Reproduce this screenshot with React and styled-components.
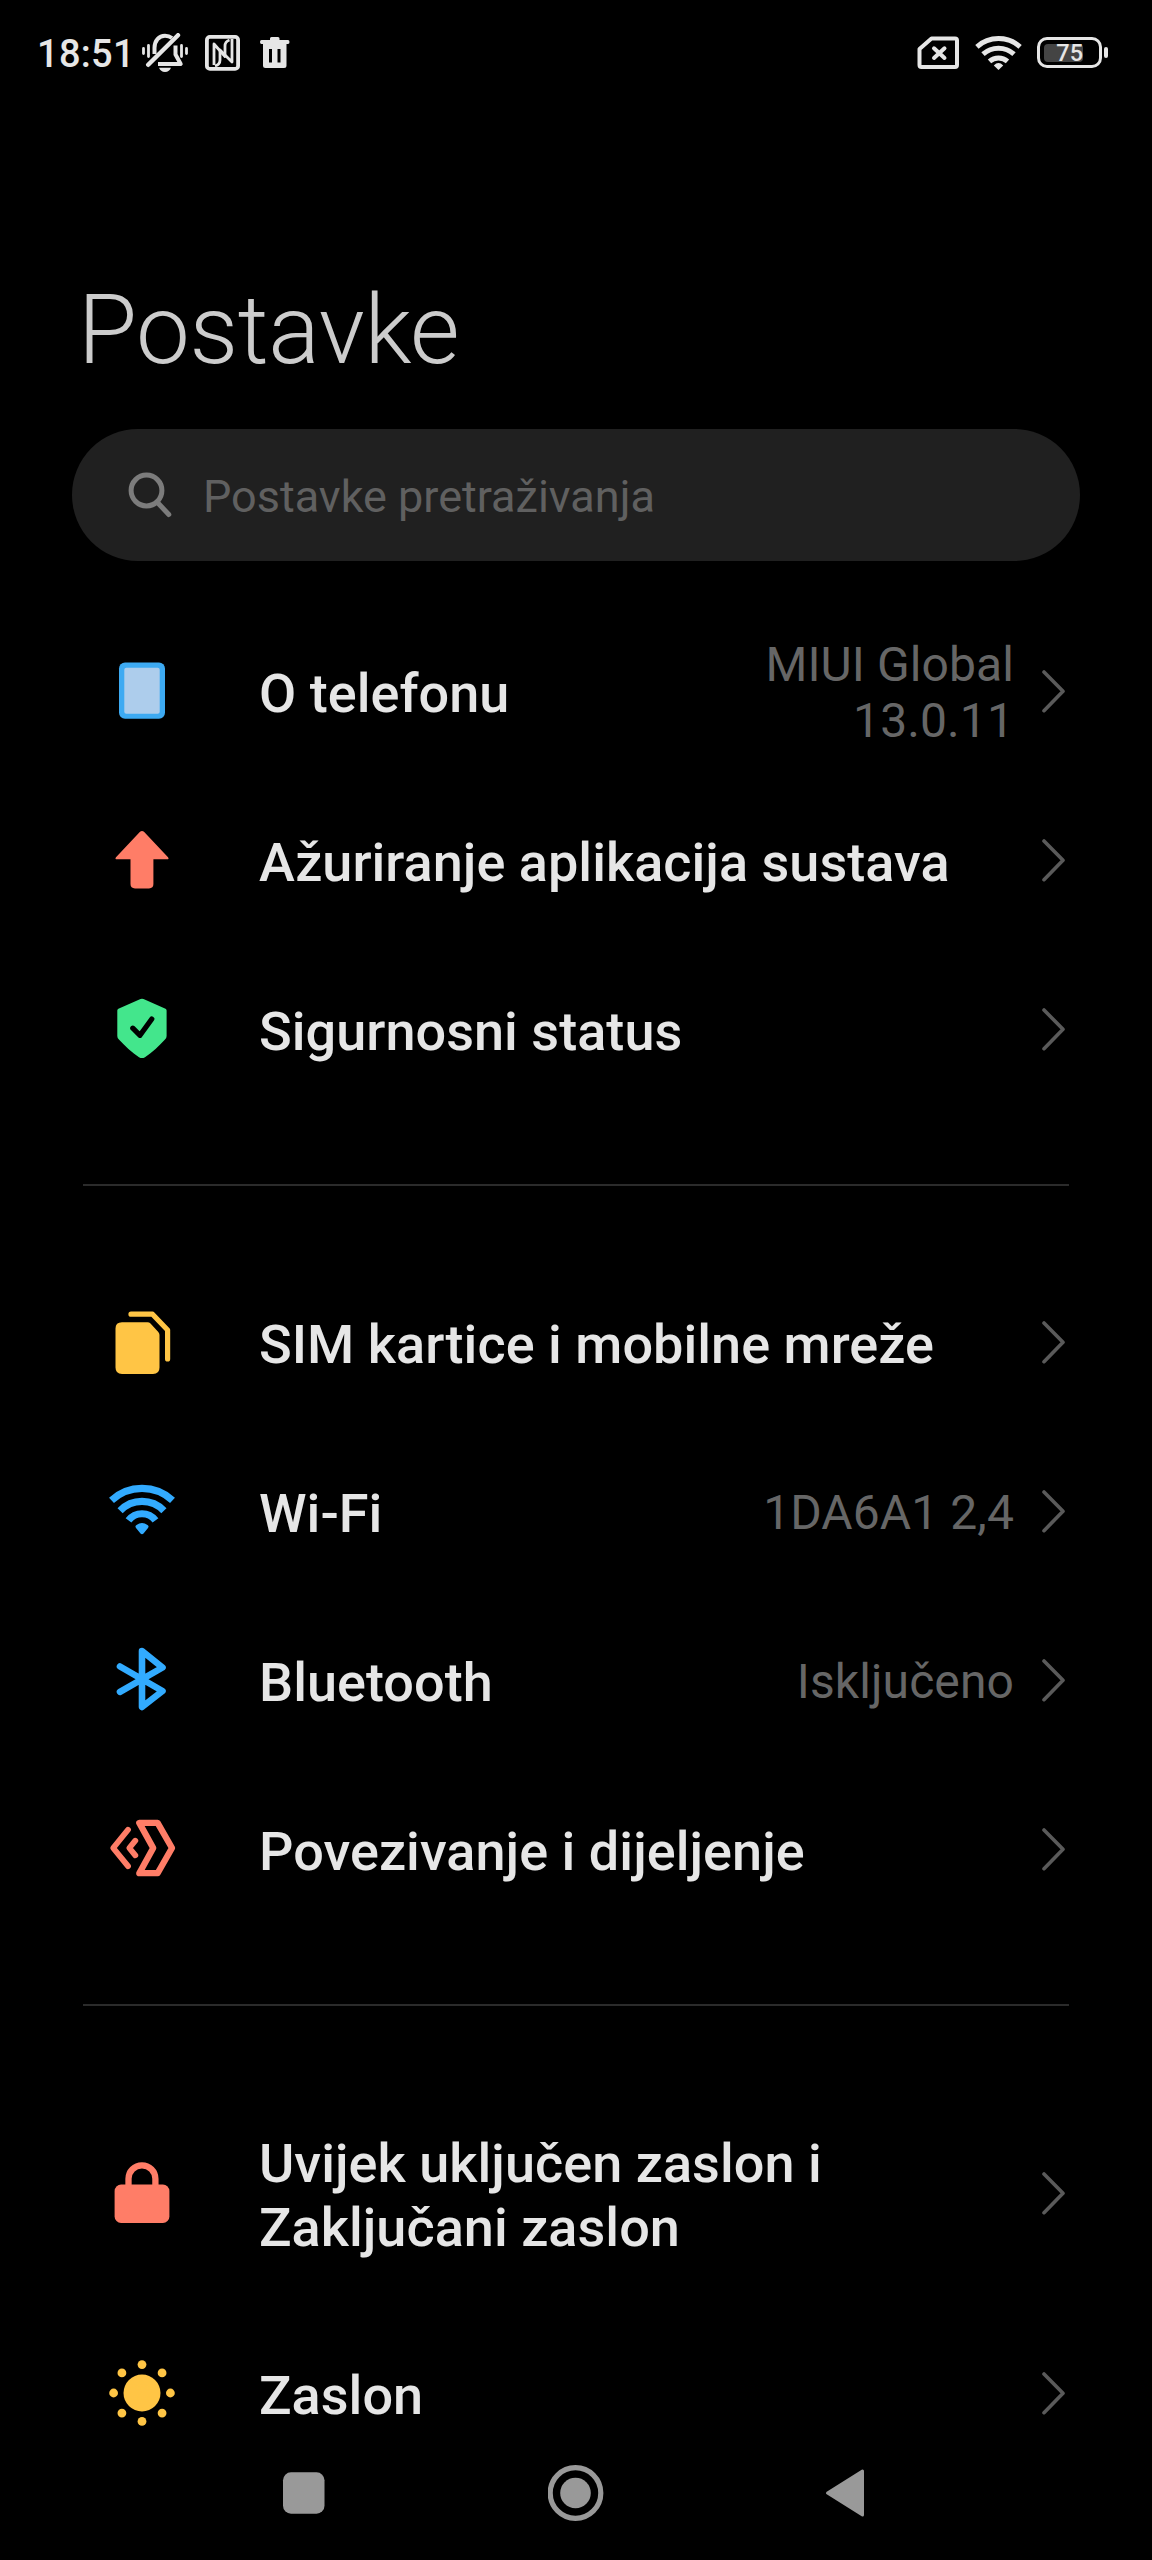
import React from 'react';
import styled, { createGlobalStyle } from 'styled-components';

const GlobalStyle = createGlobalStyle`
    * {
        box-sizing:border-box;
    }
    body {
        margin:0;
        background:#000;
        font-family:Roboto, "Noto Sans", sans-serif;
    }
    svg {
        display:block;
        flex-shrink:0;
    }
`
const Screen = styled.div`
    display:flex;
    flex-direction:column;
    width:1152px;
    height:2560px;
    background:#000;
`
const StatusBar = styled.header`
    display:flex;
    justify-content:space-between;
    align-items:center;
    height:105px;
    padding:0 44px 0 37px;
    color:#e6e6e6;
`
const StatusGroup = styled.div`
    display:flex;
    align-items:center;
    gap:${({ $gap }) => $gap}px;
`
const Clock = styled.span`
    width:88px;
    padding-top:2px;
    font-size:38px;
    font-weight:500;
    line-height:44px;
    letter-spacing:0.3px;
    white-space:nowrap;
`
const Battery = styled.div`
    display:flex;
    align-items:center;
    gap:2px;
`
const BatteryBody = styled.div`
    display:flex;
    align-items:center;
    width:65px;
    height:31px;
    padding:0 4px;
    border:3px solid #e6e6e6;
    border-radius:10px;
`
const BatteryLevel = styled.div`
    display:flex;
    justify-content:flex-end;
    align-items:center;
    width:39px;
    height:18px;
    border-radius:4px;
    background:#444;
    font-size:23.5px;
    font-weight:500;
    line-height:18px;
`
const BatteryTip = styled.div`
    width:4px;
    height:11px;
    border-radius:2px;
    background:#e6e6e6;
`
const Title = styled.h1`
    margin:169px 0 0 78px;
    font-size:96px;
    font-weight:300;
    line-height:112px;
    letter-spacing:-0.4px;
    color:#ccc;
`
const Search = styled.div`
    display:flex;
    align-items:center;
    gap:29px;
    height:132px;
    margin:43px 72px 0;
    padding-left:56px;
    border-radius:66px;
    background:#202020;
    font-size:45px;
    line-height:53px;
    color:#606060;
`
const SearchText = styled.span`
    padding-top:3px;
`
const List = styled.main`
    flex:1;
    min-height:0;
    padding-top:45px;
`
const Divider = styled.hr`
    height:2px;
    margin:71px 83px;
    border:0;
    background:#2b2b2b;
`
const Row = styled.div`
    display:flex;
    align-items:center;
    height:${({ $tall }) => ($tall ? 231 : 169)}px;
    padding:0 86px 0 109px;
`
const Label = styled.div`
    flex:1;
    margin-left:84px;
    padding-top:6px;
    font-size:54px;
    font-weight:500;
    line-height:63.3px;
    letter-spacing:0.04px;
    color:#e6e6e6;
    white-space:pre-line;
`
const Value = styled.div`
    padding-top:5px;
    font-size:48px;
    line-height:56px;
    letter-spacing:0.1px;
    text-align:right;
    color:#666;
    white-space:pre-line;
`
const Chevron = styled.svg`
    margin-left:26px;
`
const NavBar = styled.nav`
    display:flex;
    justify-content:space-between;
    align-items:center;
    height:134px;
    padding:0 276px;
`

const RowIcon = ({ children }) => (
    <svg width="66" height="66" viewBox="0 0 66 66" fill="none" overflow="visible">{children}</svg>
)

const PhoneIcon = () => (
    <RowIcon>
        <rect x="10" y="4.4" width="46" height="56.4" rx="6" fill="#3daaf2" />
        <rect x="15.3" y="9.7" width="35.4" height="46" rx="2" fill="#adcdec" />
    </RowIcon>
)
const ArrowIcon = () => (
    <RowIcon>
        <path
            d="M31 4.8Q33 3 35 4.8L59 30.2Q60.5 32.2 58 32.2H44.4V57Q44.4 61.4 40 61.4H26Q21.5 61.4 21.5 57V32.2H8Q5.5 32.2 7 30.2Z"
            fill="#ff7d67"
        />
    </RowIcon>
)
const ShieldIcon = () => (
    <RowIcon>
        <path
            d="M31.5 3Q33 2.3 34.5 3L56.5 12.8Q57.6 13.4 57.6 14.6V40Q57.6 42 56 43.6C50 50 43.5 56.5 36 61.2Q33 63 30 61.2C22.5 56.5 16 50 9.9 43.6Q8.3 42 8.3 40V14.6Q8.3 13.4 9.4 12.8Z"
            fill="#43e68c"
        />
        <path d="M23.8 32.2L31 39.3L42.8 23" stroke="#000" strokeWidth="5.2" strokeLinecap="round" strokeLinejoin="round" />
    </RowIcon>
)
const SimIcon = () => (
    <RowIcon>
        <path d="M13 13.2H38.5Q40.3 13.2 41.5 14.4L49.3 23Q50.5 24.3 50.5 26V58.5Q50.5 65 44 65H13Q6.5 65 6.5 58.5V19.5Q6.5 13.2 13 13.2Z" fill="#ffc545" />
        <path d="M22 5.2H43.5L58.6 21V50" stroke="#ffc545" strokeWidth="5.2" strokeLinecap="round" strokeLinejoin="round" />
    </RowIcon>
)
const WifiIcon = () => (
    <RowIcon>
        <g stroke="#32abff" strokeWidth="7.2">
            <path d="M2.5 22.3A44.8 44.8 0 0 1 63.5 22.3" />
            <path d="M11.1 32.7A30.4 30.4 0 0 1 54.9 32.7" />
            <path d="M19.5 42.4A17 17 0 0 1 46.5 42.4" />
        </g>
        <path d="M27.2 50.2Q25.5 48.3 27.5 46.9Q33 43.3 38.5 46.9Q40.5 48.3 38.8 50.2L34.5 55.5Q33 57 31.5 55.5Z" fill="#32abff" />
    </RowIcon>
)
const BluetoothIcon = () => (
    <RowIcon>
        <path d="M11 19.5L53.5 44L33 60V4L53.5 20.5L11 44.8" stroke="#32abff" strokeWidth="6.6" strokeLinecap="round" strokeLinejoin="round" />
    </RowIcon>
)
const ShareIcon = () => (
    <RowIcon>
        <g stroke="#ff7d67" strokeWidth="6.3" strokeLinecap="round" strokeLinejoin="round">
            <path d="M30.3 6.9H48.6L63 32L48.6 57.2H30.3L44.2 32Z" />
            <path d="M19 13.7L4.2 32L19 50.2" strokeWidth="5.8" />
            <path d="M26.3 24.7L20.3 32L26.3 39.3" strokeWidth="5.8" />
        </g>
    </RowIcon>
)
const LockIcon = () => (
    <RowIcon>
        <rect x="5.6" y="24.5" width="54.8" height="38.4" rx="6.5" fill="#ff7d67" />
        <path d="M19.5 26V18.8A13.4 13.4 0 0 1 46.4 18.8V26" stroke="#ff7d67" strokeWidth="6.3" />
    </RowIcon>
)
const SunIcon = () => (
    <RowIcon>
        <g fill="#ffc545">
            <circle cx="33" cy="33" r="18.5" />
            {[0, 45, 90, 135, 180, 225, 270, 315].map((angle) => (
                <circle key={angle} cx="33" cy="4.6" r="4.4" transform={`rotate(${angle} 33 33)`} />
            ))}
        </g>
    </RowIcon>
)

const MutedIcon = () => (
    <svg width="46" height="40" viewBox="0 0 46 40" fill="none" stroke="#e6e6e6">
        <path d="M6.2 31.8L36 2.2" strokeWidth="4.4" strokeLinecap="round" />
        <path d="M12.5 21V15C12.5 7.5 17 2.8 23 2.8C25.5 2.8 28 3.500 30 5" strokeWidth="4" />
        <path d="M33.5 12.5V21.5L38.7 31H16" strokeWidth="4" strokeLinejoin="round" />
        <path d="M17 34.8H29C28 37.5 26 39 23 39C20 39 18 37.5 17 34.8Z" fill="#e6e6e6" stroke="none" />
        <path d="M1.5 15.5V20.5M6.5 12.5V23.5M39.5 12.5V23.5M44.5 15.5V20.5" strokeWidth="2.8" strokeLinecap="round" />
    </svg>
)
const NfcIcon = () => (
    <svg width="35" height="36" viewBox="0 0 35 36" fill="none" stroke="#e6e6e6" strokeLinejoin="round">
        <rect x="1.9" y="1.9" width="31.2" height="32" rx="3" strokeWidth="3.8" />
        <path d="M9 30V9L20 21.5V11Q20 6.5 24.500 5" strokeWidth="2.8" />
        <path d="M27 4V27L15 15V25Q15 29.5 10 31" strokeWidth="2.8" />
    </svg>
)
const TrashIcon = () => (
    <svg width="33" height="32" viewBox="-3 0 33 32" fill="#e6e6e6">
        <path d="M10 3V1.5Q10 0 11.5 0H18Q19.5 0 19.5 1.5V3H28Q29.5 3 29.5 5T28 7H1.5Q0 7 0 5T1.5 3Z" />
        <path fillRule="evenodd" d="M3 6.5H26.5V28.5Q26.5 31 24 31H5.5Q3 31 3 28.5ZM9 12V25.500H12V12ZM17.5 12V25.500H20.5V12Z" />
    </svg>
)
const NoSimIcon = () => (
    <svg width="43" height="34" viewBox="0 0 43 34" fill="none" stroke="#e6e6e6" strokeLinejoin="round">
        <path d="M14.5 2.5H38Q40 2.5 40 4.5V29Q40 31 38 31H4.5Q2.5 31 2.5 29V13Z" strokeWidth="4" />
        <path d="M17 12.3L27.5 22M27.5 12.3L17 22" strokeWidth="4" strokeLinecap="round" />
    </svg>
)
const SignalIcon = () => (
    <svg width="47" height="36" viewBox="0 0 47 36" fill="none" stroke="#e6e6e6" strokeWidth="5">
        <path d="M1.9 11.8A32.5 32.5 0 0 1 45.1 11.8" />
        <path d="M8 19.2A23 23 0 0 1 39 19.2" />
        <path d="M14.5 26.4A13.5 13.5 0 0 1 32.5 26.4" />
        <path d="M18.8 30.5Q23.5 25.6 28.2 30.5L23.5 35Z" fill="#e6e6e6" stroke="none" />
    </svg>
)
const SearchIcon = () => (
    <svg width="46" height="46" viewBox="0 0 46 46" fill="none" stroke="#7c7c7c" strokeLinecap="round">
        <circle cx="18.5" cy="18.5" r="15.4" strokeWidth="5" />
        <path d="M29.5 30.5L40.8 42.5" strokeWidth="5" />
    </svg>
)

const SquareButton = () => (
    <svg width="56" height="56" viewBox="0 0 56 56">
        <rect x="7" y="7.3" width="41.5" height="41.4" rx="8" fill="#999" />
    </svg>
)
const HomeButton = () => (
    <svg width="56" height="56" viewBox="0 0 56 56">
        <circle cx="27.5" cy="28" r="25.3" fill="none" stroke="#999" strokeWidth="5.2" />
        <circle cx="27.5" cy="28" r="15.3" fill="#999" />
    </svg>
)
const BackButton = () => (
    <svg width="56" height="56" viewBox="0 0 56 56">
        <path d="M7.5 28L42.5 6V50Z" fill="#999" stroke="#999" strokeWidth="3" strokeLinejoin="round" />
    </svg>
)

const groups = [
    [
        { icon: PhoneIcon, label: 'O telefonu', value: 'MIUI Global\n13.0.11' },
        { icon: ArrowIcon, label: 'Ažuriranje aplikacija sustava' },
        { icon: ShieldIcon, label: 'Sigurnosni status' },
    ],
    [
        { icon: SimIcon, label: 'SIM kartice i mobilne mreže' },
        { icon: WifiIcon, label: 'Wi-Fi', value: '1DA6A1 2,4' },
        { icon: BluetoothIcon, label: 'Bluetooth', value: 'Isključeno' },
        { icon: ShareIcon, label: 'Povezivanje i dijeljenje' },
    ],
    [
        { icon: LockIcon, label: 'Uvijek uključen zaslon i\nZaključani zaslon', tall: true },
        { icon: SunIcon, label: 'Zaslon' },
    ],
]

const SettingsRow = ({ icon: Icon, label, value, tall }) => (
    <Row $tall={tall}>
        <Icon />
        <Label>{label}</Label>
        {value && <Value>{value}</Value>}
        <Chevron width="26" height="44" viewBox="0 0 26 44" fill="none">
            <path d="M4 3L23 22.3L4 41.7" stroke="#5a5a5a" strokeWidth="3.6" strokeLinecap="round" strokeLinejoin="round" />
        </Chevron>
    </Row>
)

const App = () => {
    return (
        <Screen>
            <GlobalStyle />
            <StatusBar>
                <StatusGroup $gap={17}>
                    <Clock>18:51</Clock>
                    <MutedIcon />
                    <NfcIcon />
                    <TrashIcon />
                </StatusGroup>
                <StatusGroup $gap={15}>
                    <NoSimIcon />
                    <SignalIcon />
                    <Battery>
                        <BatteryBody>
                            <BatteryLevel>75</BatteryLevel>
                        </BatteryBody>
                        <BatteryTip />
                    </Battery>
                </StatusGroup>
            </StatusBar>
            <Title>Postavke</Title>
            <Search>
                <SearchIcon />
                <SearchText>Postavke pretraživanja</SearchText>
            </Search>
            <List>
                {groups.map((rows, index) => (
                    <React.Fragment key={index}>
                        {index > 0 && <Divider />}
                        {rows.map((row) => (
                            <SettingsRow key={row.label} {...row} />
                        ))}
                    </React.Fragment>
                ))}
            </List>
            <NavBar>
                <SquareButton />
                <HomeButton />
                <BackButton />
            </NavBar>
        </Screen>
    )
}

export default App
